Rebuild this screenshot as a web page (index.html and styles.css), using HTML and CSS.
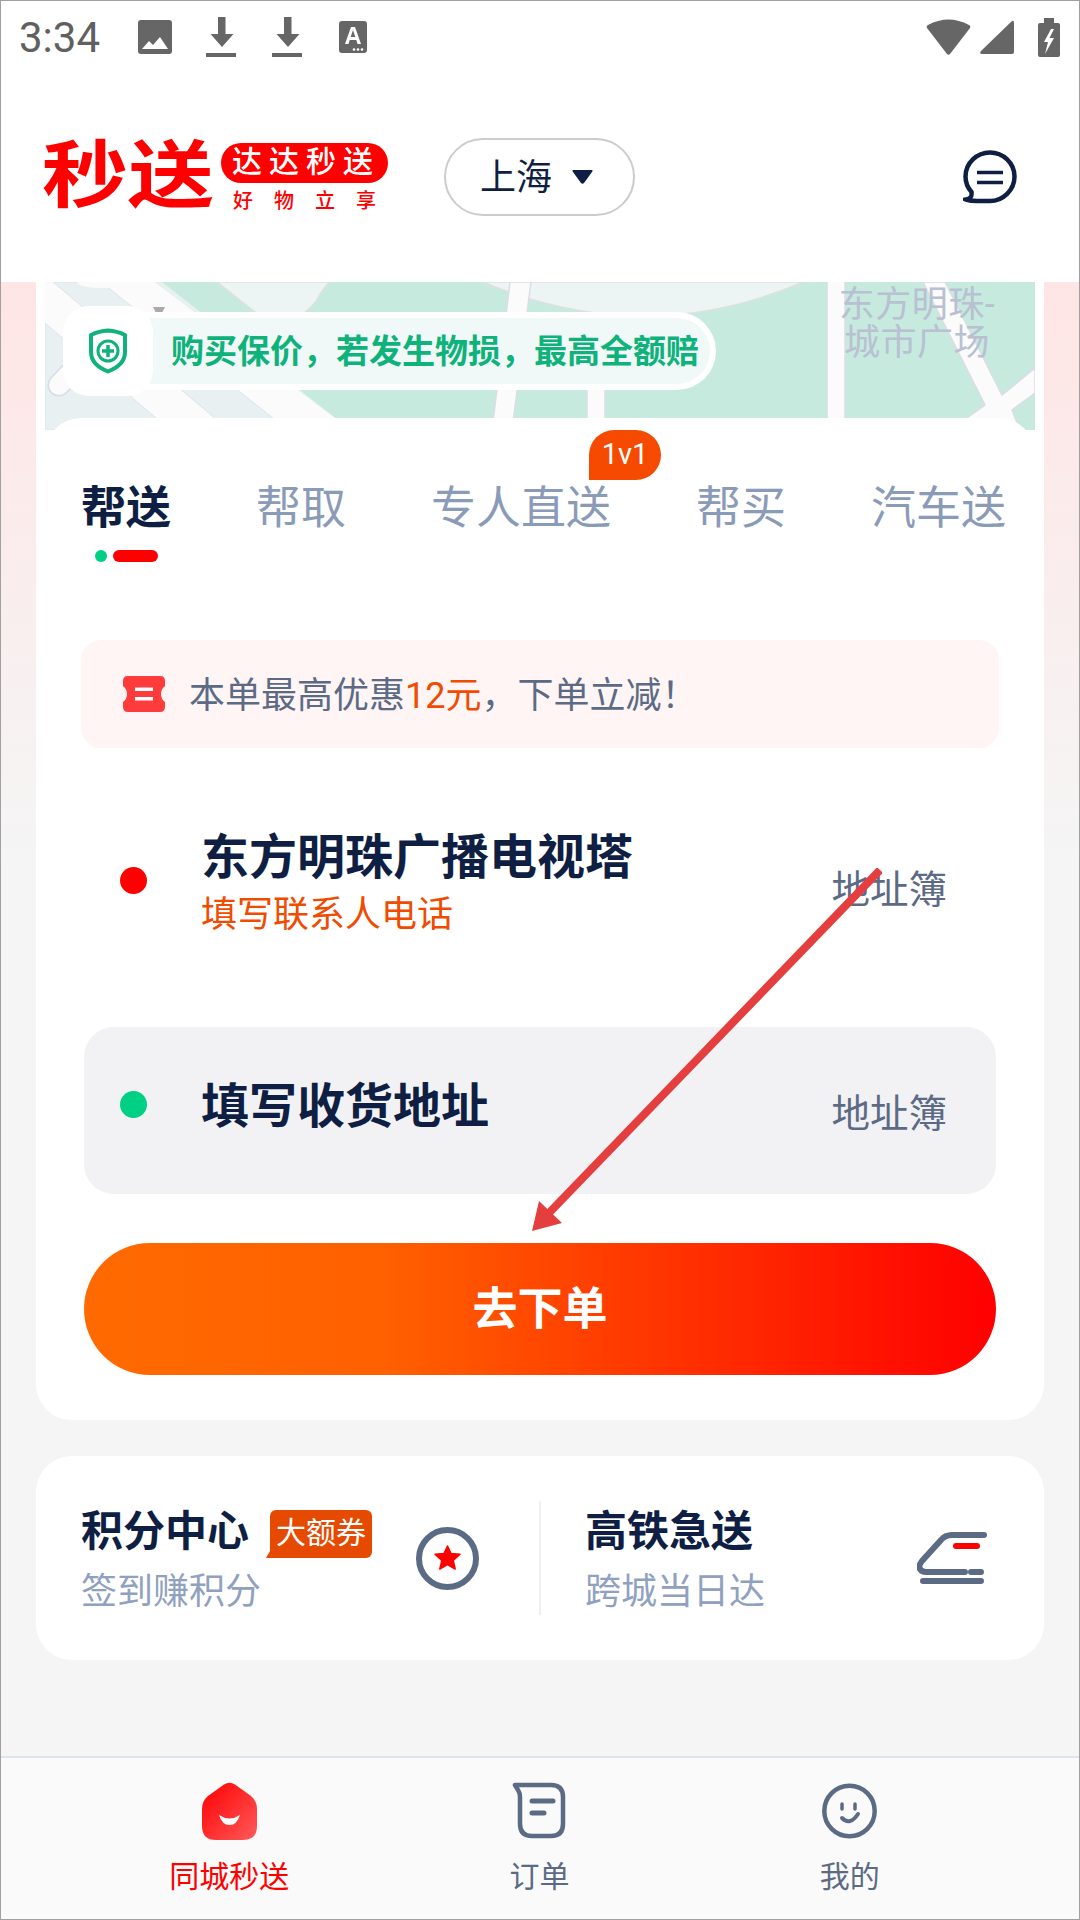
FILE: index.html
```html
<!DOCTYPE html>
<html lang="zh-CN">
<head>
  <meta charset="UTF-8">
  <title>秒送</title>
  <meta name="viewport" content="width=device-width, initial-scale=1.0">
  <link rel="stylesheet" href="styles.css">
</head>
<body>
  <div class="page">

    <div class="status">
      <span class="time">3:34</span>
      <div class="status-left">
        <svg width="34" height="40" viewBox="0 0 34 40"><rect y="3" width="34" height="34" rx="3" fill="#666"/><path d="M4 32 L11 24 L15 28 L22 20 L30 32 Z" fill="#fff"/></svg>
        <svg width="34" height="40" viewBox="0 0 34 40"><path d="M14 0 H21.5 V17 H29.5 L18 30 L6.500 17 H14 Z M2 36 H32 V40 H2 Z" fill="#666"/></svg>
        <svg width="34" height="40" viewBox="0 0 34 40"><path d="M14 0 H21.500 V17 H29.5 L18 30 L6.500 17 H14 Z M2 36 H32 V40 H2 Z" fill="#666"/></svg>
        <svg width="34" height="40" viewBox="0 0 34 40"><rect x="3" y="4" width="28" height="32" rx="3" fill="#666"/><path d="M9 27 L15 10 H19 L25 27 H21.500 L20.300 23 H13.700 L12.500 27 Z M14.700 20 H19.300 L17 13 Z" fill="#fff"/><circle cx="18" cy="32.500" r="1.300" fill="#fff"/><circle cx="22" cy="32.500" r="1.300" fill="#fff"/><circle cx="26" cy="32.500" r="1.300" fill="#fff"/></svg>
      </div>
      <div class="status-right">
        <svg width="45" height="36" viewBox="0 0 45 36"><path d="M1 9 Q0 7 2 6 Q22.500 -5 43 6 Q45 7 44 9 L24 35 Q22.500 36.500 21 35 Z" fill="#666"/></svg>
        <svg width="34" height="34" viewBox="0 0 34 34"><path d="M32 1 Q34 0 34 3 V32 Q34 34 32 34 H2 Q-1 34 1 31 Z" fill="#666"/></svg>
        <svg class="batt" width="22" height="39" viewBox="0 0 22 39"><path d="M6 0 H16 V5 H20 Q22 5 22 7 V37 Q22 39 20 39 H2 Q0 39 0 37 V7 Q0 5 2 5 H6 Z" fill="#666"/><path d="M13 11 L6 24 H10 L7 36 L16 20 H11.500 L16 11 Z" fill="#fff"/></svg>
      </div>
    </div>

    <div class="header">
      <div class="logo">秒送</div>
      <div class="logo-side">
        <div class="logo-pill">达达秒送</div>
        <div class="logo-slogan">好物立享</div>
      </div>
      <div class="city">
        <span>上海</span>
        <svg width="21" height="14" viewBox="0 0 21 14"><path d="M1.500 0 H19.500 Q21.500 0 20 2 L12 13 Q10.500 14.500 9 13 L1 2 Q-0.500 0 1.500 0 Z" fill="#0f1f43"/></svg>
      </div>
      <svg class="msg" width="54" height="54" viewBox="0 0 54 54"><path d="M27 2.500 C40 2.500 51.500 13 51.500 26.500 S40 51 27 51 H14 C10 51 6 50.500 3 49.500 C8 48.500 9 46 8.500 42 C4.500 37.500 2.500 32 2.500 26.500 C2.500 13 14 2.500 27 2.500 Z" fill="none" stroke="#0f1f43" stroke-width="4.500"/><path d="M14 22.500 H40 M14 32.500 H40" stroke="#0f1f43" stroke-width="3.500" fill="none"/></svg>
    </div>

    <div class="main">
      <div class="card">
        <div class="map">
          <svg class="map-bg" width="990" height="148" viewBox="0 0 990 148">
            <rect width="990" height="148" fill="#c6eade"/>
            <polygon points="0,0 110,0 306,148 0,148" fill="#fbfbfb"/>
            <polygon points="110,0 117,0 306,148" fill="#e8f0f2"/>
            <polygon points="8,0 56,0 243,148 184,148" fill="#e8f0f2" stroke="#dfe2ec" stroke-width="1"/>
            <polygon points="0,41 125,148 0,148" fill="#e8f0f2" stroke="#dfe2ec" stroke-width="1"/>
            <ellipse cx="56" cy="0" rx="24" ry="6" fill="#fbfbfb"/>
            <path d="M45 70 L14 103" stroke="#d8dbe8" stroke-width="23" stroke-linecap="round"/>
            <path d="M45 70 L14 103" stroke="#fbfbfb" stroke-width="20" stroke-linecap="round"/>
            <polygon points="108,25 120,25 117,31 111,31" fill="#aaa"/>
            <path d="M172 0 L215 34 L255 34 Q270 24 275 12 L284 0 Z" fill="#ecf5f3" stroke="#e0dfdf" stroke-width="1.500"/>
            <path d="M438 0 Q600 68 758 0 Z" fill="#ecf5f3" stroke="#e0dfdf" stroke-width="1.500"/>
            <polygon points="465,0 486,0 467,148 447,148" fill="#fbfbfb" stroke="#dcdce8" stroke-width="1.500"/>
            <polygon points="542,105 560,105 560,148 542,148" fill="#fbfbfb" stroke="#dcdce8" stroke-width="1.500"/>
            <rect x="782" y="-2" width="18" height="152" fill="#fbfbfb" stroke="#dcdce8" stroke-width="1.500"/>
            <polygon points="878,0 900,0 957,113 990,86 990,111 967,128 975,148 905,148 940,123" fill="#fbfbfb" stroke="#dcdce8" stroke-width="1.500"/>
          </svg>
          <div class="map-label">东方明珠-<br>城市广场</div>
          <div class="guard">
            <div class="guard-icon">
              <svg width="40" height="46" viewBox="0 0 40 46"><path d="M20 2.500 Q29 3 37 7 V24 C37 34 29 40 20 43.500 C11 40 3 34 3 24 V7 Q11 3 20 2.500 Z" fill="none" stroke="#0eb27a" stroke-width="4" stroke-linejoin="round"/><circle cx="20" cy="23" r="10" fill="none" stroke="#0eb27a" stroke-width="3"/><path d="M20 17 V29 M14 23 H26" stroke="#0eb27a" stroke-width="3.500"/></svg>
            </div>
            <div class="guard-text">购买保价，若发生物损，最高全额赔</div>
          </div>
        </div>

        <div class="panel">
          <div class="tabs">
            <div class="tab tab-on">帮送</div>
            <div class="tab">帮取</div>
            <div class="tab">专人直送<span class="tab-badge">1v1</span></div>
            <div class="tab">帮买</div>
            <div class="tab">汽车送</div>
          </div>
          <div class="tab-mark"><i class="mark-dot"></i><i class="mark-bar"></i></div>

          <div class="coupon">
            <svg width="42" height="36" viewBox="0 0 42 36"><path d="M5 0 H37 Q42 0 42 5 V10 Q38 13 38 18 Q38 23 42 26 V31 Q42 36 37 36 H5 Q0 36 0 31 V26 Q4 23 4 18 Q4 13 0 10 V5 Q0 0 5 0 Z" fill="#ff3b3b"/><path d="M12 11.500 H30 V15 H12 Z M12 21 H30 V24.500 H12 Z" fill="#fff"/></svg>
            <span>本单最高优惠<em>12元</em>，下单立减！</span>
          </div>

          <div class="addr">
            <i class="dot dot-red"></i>
            <div class="addr-text">
              <div class="addr-title">东方明珠广播电视塔</div>
              <div class="addr-sub">填写联系人电话</div>
            </div>
            <span class="addr-book">地址簿</span>
          </div>

          <div class="addr addr-to">
            <i class="dot dot-green"></i>
            <div class="addr-text">
              <div class="addr-title">填写收货地址</div>
            </div>
            <span class="addr-book">地址簿</span>
          </div>

          <div class="go">去下单</div>
        </div>
      </div>

      <div class="card2">
        <div class="half half-left">
          <div class="half-text">
            <div class="half-head">
              <span class="half-title">积分中心</span>
              <span class="half-tag">大额券</span>
            </div>
            <div class="half-sub">签到赚积分</div>
          </div>
          <svg width="63" height="63" viewBox="0 0 63 63"><circle cx="31.500" cy="31.500" r="28.500" fill="none" stroke="#5c6b85" stroke-width="6"/><polygon points="31.500,19 35,26.600 44,27.300 37.200,33.400 39.200,42 31.500,37.500 23.800,42 25.800,33.400 19,27.300 28,26.600" fill="#f00" stroke="#f00" stroke-width="1.500" stroke-linejoin="round"/></svg>
        </div>
        <div class="half half-right">
          <div class="half-text">
            <div class="half-head"><span class="half-title">高铁急送</span></div>
            <div class="half-sub">跨城当日达</div>
          </div>
          <svg width="70" height="52" viewBox="0 0 70 52"><path d="M67 3 H35 Q28 3 24 8 L5 29 Q1 34 3 37 Q5 40 9 40 H48 M54 40 H64 M6 49 H64" fill="none" stroke="#5c6b85" stroke-width="6" stroke-linecap="round"/><path d="M39 14 H60" stroke="#f00" stroke-width="6" stroke-linecap="round"/></svg>
        </div>
      </div>
    </div>

    <div class="nav">
      <div class="nav-item nav-on">
        <svg width="55" height="58" viewBox="0 0 55 58"><defs><linearGradient id="homeRed" x1="0" y1="0" x2="1" y2="1"><stop offset="0" stop-color="#f00"/><stop offset="1" stop-color="#ff5a5a"/></linearGradient></defs><path d="M22 2.500 Q27.500 -1 33 2.500 L49 14 Q55 19 55 27 V44 Q55 58 41 58 H14 Q0 58 0 44 V27 Q0 19 6 14 Z" fill="url(#homeRed)"/><path d="M17 33 Q27.500 40 38 33 Q35 43 27.500 43 Q20 43 17 33 Z" fill="#fff"/></svg>
        <span>同城秒送</span>
      </div>
      <div class="nav-item">
        <svg width="55" height="58" viewBox="0 0 55 58"><path d="M3 3 H39 Q51 3 51 15 V42 Q51 54 39 54 H20 Q8 54 8 42 V15 Q8 11 6 8 Q3 3 3 3 Z" fill="none" stroke="#5c6b85" stroke-width="4.500" stroke-linejoin="round"/><path d="M20 19 H41 M20 31 H32" stroke="#5c6b85" stroke-width="5" stroke-linecap="round"/></svg>
        <span>订单</span>
      </div>
      <div class="nav-item">
        <svg width="55" height="58" viewBox="0 0 55 58"><circle cx="27.500" cy="29" r="25.200" fill="none" stroke="#5c6b85" stroke-width="4.500"/><path d="M20 22 V27 M33 22 V27" stroke="#5c6b85" stroke-width="3.500" stroke-linecap="round"/><path d="M20 36 Q28 44 36 32" fill="none" stroke="#5c6b85" stroke-width="4" stroke-linecap="round"/></svg>
        <span>我的</span>
      </div>
    </div>

    <svg class="arrow" width="352" height="364" viewBox="530 868 352 364"><path d="M880 870 L548 1214" stroke="#e53e3e" stroke-width="8"/><polygon points="532,1231 539,1201 562,1223" fill="#e53e3e"/></svg>
  </div>
</body>
</html>
```

FILE: styles.css
```css
* {
  box-sizing: border-box;
}

body {
  margin: 0;
  font-family: Roboto, "Noto Sans CJK SC", sans-serif;
  color: #0f1f43;
}

.page {
  position: relative;
  display: flex;
  flex-direction: column;
  width: 1080px;
  height: 1920px;
  border: 1px solid #a0a0a0;
  background-color: #fff;
  overflow: hidden;
}

/* status bar */
.status {
  display: flex;
  align-items: center;
  height: 72px;
  padding: 0 19px 0 18px;
}

.time {
  width: 119px;
  margin-top: 2px;
  font-size: 42px;
  line-height: 1;
  color: #606060;
}

.status-left {
  display: flex;
  align-items: center;
  gap: 32px;
}

.status-right {
  display: flex;
  align-items: center;
  gap: 9px;
  margin-left: auto;
}

.batt {
  margin-left: 15px;
}

/* header */
.header {
  display: flex;
  align-items: center;
  height: 209px;
  padding: 0 62px 2px 41px;
}

.logo {
  width: 170px;
  font-size: 86px;
  font-weight: 700;
  line-height: 84px;
  color: #f00;
  transform: scaleY(0.84);
  white-space: nowrap;
}

.logo-side {
  width: 167px;
  margin: 0 0 0 9px;
}

.logo-pill {
  height: 40px;
  padding-left: 11px;
  border-radius: 20px;
  background-color: #f00;
  color: #fff;
  font-size: 30px;
  font-weight: 500;
  line-height: 38px;
  letter-spacing: 7px;
  white-space: nowrap;
}

.logo-slogan {
  margin-top: 8px;
  padding-left: 12px;
  color: #f00;
  font-size: 20px;
  font-weight: 500;
  line-height: 20px;
  letter-spacing: 21px;
  white-space: nowrap;
}

.city {
  display: flex;
  align-items: center;
  gap: 20px;
  width: 191px;
  height: 78px;
  margin-left: 56px;
  padding-left: 34px;
  border: 2px solid #ccc;
  border-radius: 39px;
  font-size: 36px;
}

.city span {
  margin-bottom: 6px;
}

.msg {
  margin-left: auto;
}

/* main area */
.main {
  flex: 1;
  padding: 0 35px;
  background: linear-gradient(#ffe5e5, #f5f5f5 578px);
}

.card {
  padding: 0 9px;
  border-radius: 0 0 36px 36px;
  background-color: #fff;
  overflow: hidden;
}

.map {
  position: relative;
  height: 148px;
  overflow: hidden;
}

.map-bg {
  display: block;
}

.map-label {
  position: absolute;
  left: 788px;
  top: 4px;
  width: 168px;
  color: #b8c0d2;
  font-size: 36px;
  line-height: 38px;
  letter-spacing: 0.5px;
  text-align: center;
  white-space: nowrap;
}

.guard {
  position: absolute;
  left: 18px;
  top: 24px;
  display: flex;
  align-items: center;
}

.guard-icon {
  position: relative;
  z-index: 1;
  display: flex;
  align-items: center;
  justify-content: center;
  width: 90px;
  height: 90px;
  border-radius: 26px;
  background-color: #fff;
}

.guard-text {
  height: 78px;
  margin-left: -20px;
  padding: 0 11px 0 38px;
  border: 6px solid #fff;
  border-left: 0;
  border-radius: 0 39px 39px 0;
  background-color: #f0f9f7;
  color: #0eb27a;
  font-size: 33px;
  font-weight: 600;
  line-height: 68px;
  white-space: nowrap;
}

.panel {
  position: relative;
  margin-top: -12px;
  padding: 66px 39px 45px;
  border-radius: 36px 36px 0 0;
  background-color: #fff;
}

/* tabs */
.tabs {
  display: flex;
  gap: 85px;
  margin-left: -3px;
}

.tab {
  position: relative;
  color: #8a9bb8;
  font-size: 45px;
  line-height: 50px;
  white-space: nowrap;
}

.tab-on {
  color: #0f1f43;
  font-weight: 600;
}

.tab-badge {
  position: absolute;
  left: 158px;
  top: -54px;
  width: 72px;
  height: 50px;
  border-radius: 25px 25px 25px 0;
  background-color: #f54a00;
  color: #fff;
  font-size: 29px;
  line-height: 48px;
  text-align: center;
}

.tab-mark {
  display: flex;
  gap: 6px;
  height: 12px;
  margin: 16px 0 0 11px;
}

.mark-dot {
  width: 12px;
  border-radius: 50%;
  background-color: #00d084;
}

.mark-bar {
  width: 45px;
  border-radius: 6px;
  background-color: #f00;
}

/* coupon */
.coupon {
  display: flex;
  align-items: center;
  gap: 24px;
  height: 108px;
  margin: 78px -3px 0;
  padding: 0 0 4px 42px;
  border-radius: 20px;
  background-color: #fff5f5;
  color: #5c6b85;
  font-size: 36px;
}

.coupon svg {
  margin-top: 4px;
}

.coupon em {
  color: #f04b00;
  font-style: normal;
}

/* address rows */
.addr {
  display: flex;
  align-items: center;
  height: 167px;
  margin-top: 55px;
  padding: 0 49px 0 36px;
  border-radius: 30px;
}

.addr-to {
  margin-top: 57px;
  background-color: #f2f2f5;
}

.dot {
  flex: none;
  width: 27px;
  height: 27px;
  margin-bottom: 12px;
  border-radius: 50%;
}

.dot-red {
  background-color: #f00;
}

.dot-green {
  background-color: #00d084;
}

.addr-text {
  margin: 0 0 7px 54px;
}

.addr-title {
  font-size: 48px;
  font-weight: 600;
  line-height: 56px;
}

.addr-sub {
  margin-top: 7px;
  color: #f04b00;
  font-size: 36px;
  line-height: 44px;
}

.addr-book {
  margin: 0 0 2px auto;
  color: #5c6b85;
  font-size: 38.5px;
}

.go {
  height: 132px;
  margin-top: 49px;
  border-radius: 66px;
  background: linear-gradient(90deg, #ff6a00, #ff6000 33%, #f00);
  color: #fff;
  font-size: 45px;
  font-weight: 600;
  line-height: 134px;
  text-align: center;
}

/* second card */
.card2 {
  display: flex;
  align-items: center;
  height: 204px;
  margin-top: 36px;
  border-radius: 36px;
  background-color: #fff;
}

.half {
  display: flex;
  align-items: center;
  justify-content: space-between;
  height: 114px;
}

.half-left {
  width: 505px;
  padding: 0 60px 0 45px;
  border-right: 2px solid #f0f0f0;
}

.half-right {
  flex: 1;
  padding: 0 57px 0 44px;
}

.half-text {
  margin-top: 3px;
}

.half-head {
  display: flex;
  align-items: flex-start;
  height: 48px;
}

.half-title {
  font-size: 42px;
  font-weight: 600;
  line-height: 48px;
}

.half-tag {
  position: relative;
  width: 102px;
  height: 48px;
  margin: 2px 0 0 21px;
  border-radius: 6px 6px 6px 0;
  background-color: #e64a00;
  color: #fff;
  font-size: 30px;
  line-height: 46px;
  text-align: center;
}

.half-tag::before {
  content: "";
  position: absolute;
  left: -4px;
  bottom: 0;
  border-bottom: 7px solid #e64a00;
  border-left: 4px solid transparent;
}

.half-sub {
  margin-top: 16px;
  color: #8fa1bf;
  font-size: 36px;
  line-height: 40px;
}

/* bottom nav */
.nav {
  display: grid;
  grid-template-columns: repeat(3, 1fr);
  height: 163px;
  padding: 24px 74px 0 73px;
  border-top: 2px solid #dfe3ee;
  background-color: #fafafa;
}

.nav-item {
  display: flex;
  flex-direction: column;
  align-items: center;
  gap: 22px;
  color: #5c6b85;
  font-size: 30px;
  line-height: 30px;
}

.nav-on {
  color: #f00;
}

/* red annotation arrow */
.arrow {
  position: absolute;
  left: 529px;
  top: 867px;
}
```
